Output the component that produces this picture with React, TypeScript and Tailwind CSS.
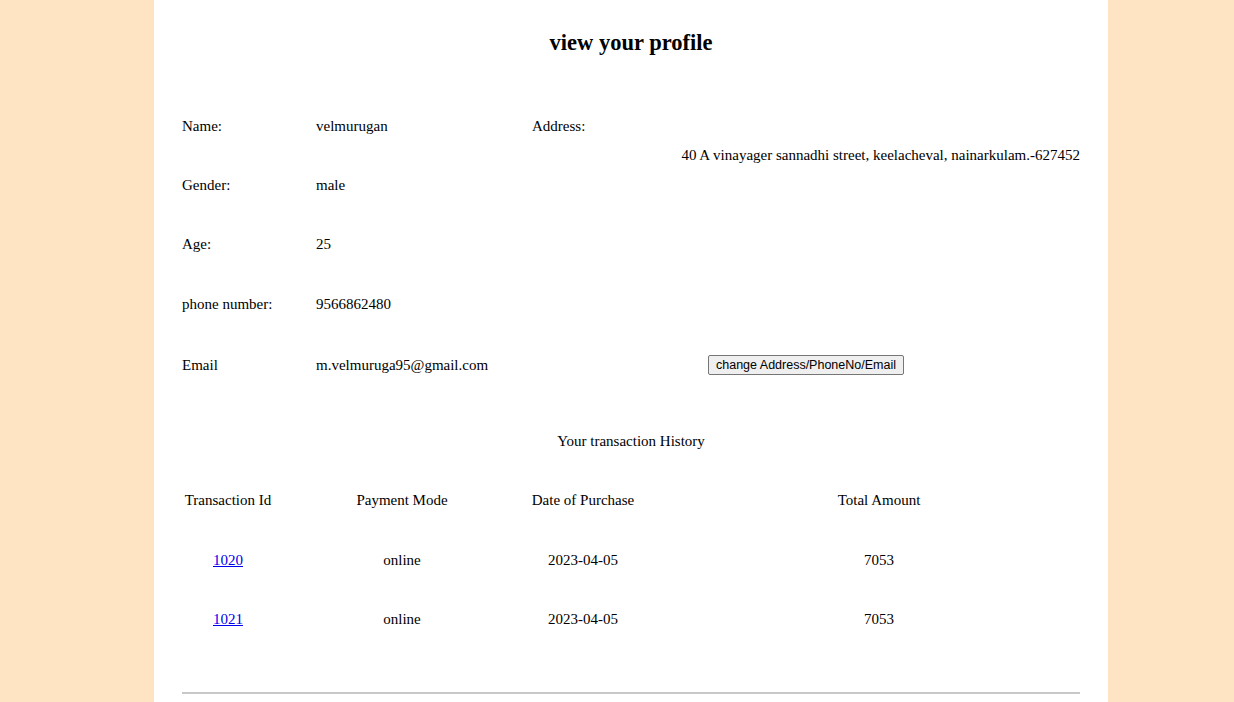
import React from "react";

// Rows of the profile section
const rows = [
  { label: "Gender:", value: "male" },
  { label: "Age:", value: "25" },
  { label: "phone number:", value: "9566862480" },
];

const transactions = [
  { id: "1020", mode: "online", date: "2023-04-05", amount: "7053" },
  { id: "1021", mode: "online", date: "2023-04-05", amount: "7053" },
];

const tableCols = "grid grid-cols-[92px_256px_106px_42px_1fr] h-[30px] items-center text-center";

export default function App() {
  return (
    <div className="min-h-[702px] bg-[#ffe4c4] font-['Liberation_Serif',serif] text-black">
      <div className="ml-[154px] w-[954px] min-h-[702px] bg-white px-[28px] pt-[28px]">
        <h2 className="h-[30px] leading-[30px] text-center text-[22.5px] font-bold">view your profile</h2>

        {/* profile info */}
        <div className="mt-[53px] text-[15px]">
          <div className="grid grid-cols-[134px_216px_1fr] h-[30px] items-center">
            <span>Name:</span>
            <span>velmurugan</span>
            <span>Address:</span>
          </div>
          <div className="h-[29px] flex items-center justify-end">
            40 A vinayager sannadhi street, keelacheval, nainarkulam.-627452
          </div>
          {rows.map((r, i) => (
            <div
              key={r.label}
              className={`grid grid-cols-[134px_1fr] h-[30px] items-center ${i > 0 ? "mt-[29.5px]" : ""}`}
            >
              <span>{r.label}</span>
              <span>{r.value}</span>
            </div>
          ))}
          <div className="mt-[31px] grid grid-cols-[134px_392px_auto_1fr] h-[30px] items-center">
            <span>Email</span>
            <span>m.velmuruga95@gmail.com</span>
            <button className="h-[20px] px-[7px] bg-[#efefef] border border-[#767676] rounded-[2px] font-['Liberation_Sans',sans-serif] text-[12.5px] leading-none text-black">
              change Address/PhoneNo/Email
            </button>
          </div>
        </div>

        {/* transactions */}
        <div className="mt-[46px] h-[30px] leading-[30px] text-center text-[15px]">Your transaction History</div>
        <div className="mt-[29px] text-[15px]">
          <div className={tableCols}>
            <span>Transaction Id</span>
            <span>Payment Mode</span>
            <span>Date of Purchase</span>
            <span />
            <span>Total Amount</span>
          </div>
          {transactions.map((t, i) => (
            <div key={t.id} className={`${tableCols} ${i === 0 ? "mt-[30px]" : "mt-[29px]"}`}>
              <span>
                <a href="#" className="text-[#0000ee] underline">
                  {t.id}
                </a>
              </span>
              <span>{t.mode}</span>
              <span>{t.date}</span>
              <span />
              <span>{t.amount}</span>
            </div>
          ))}
        </div>

        <hr className="mt-[58px] border-0 h-[2px] bg-[#c8c8c8]" />
      </div>
    </div>
  );
}
